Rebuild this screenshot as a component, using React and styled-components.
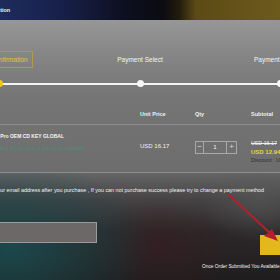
import React from "react"
import styled, { createGlobalStyle } from "styled-components"

const GlobalStyle = createGlobalStyle`
  html, body {
    margin: 0;
    padding: 0;
    background: #222;
  }
  body {
    font-family: "Liberation Sans", Arial, sans-serif;
  }
`

const Page = styled.div`
  position: relative;
  width: 280px;
  height: 280px;
  overflow: hidden;
  display: flex;
  flex-direction: column;
`

const TopBar = styled.div`
  height: 20px;
  flex-shrink: 0;
  display: flex;
  align-items: center;
  background: linear-gradient(
    90deg,
    #1e2b5c 0%,
    #17204a 22%,
    #0d0f1f 45%,
    #0b0b12 58%,
    #221c0c 64%,
    #5c4a16 70%,
    #6c5a1c 100%
  );
`

const Crumb = styled.span`
  margin-left: -24px;
  color: #f2f2f2;
  font-size: 5.5px;
  font-weight: bold;
  white-space: nowrap;
`

const Panel = styled.div`
  height: 153px;
  flex-shrink: 0;
  background: linear-gradient(180deg, #979797 0%, #848484 25%, #757575 50%, #6d6d6d 100%);
  display: flex;
  flex-direction: column;
`

const Steps = styled.div`
  margin-top: 31px;
  margin-left: -70px;
  display: grid;
  grid-template-columns: repeat(3, 140px);
  height: 17px;
  align-items: center;
  justify-items: center;
`

const Step = styled.div`
  font-size: 6.5px;
  white-space: nowrap;
  color: ${(p) => (p.$active ? "#e6c43c" : "#f4f4f4")};
  height: 17px;
  box-sizing: border-box;
  padding: 0 4px;
  display: flex;
  align-items: center;
  border: 1px solid ${(p) => (p.$active ? "#b6954c" : "transparent")};
`

const Track = styled.div`
  margin: 12px -4px 0;
  height: 7px;
  display: flex;
  justify-content: space-between;
  align-items: center;
  background: linear-gradient(#f4f4f4, #f4f4f4) center / 100% 2px no-repeat;
`

const Dot = styled.span`
  width: 7px;
  height: 7px;
  border-radius: 50%;
  background: ${(p) => (p.$active ? "#e8c91c" : "#f6f6f6")};
`

const Row = styled.div`
  margin-left: -52px;
  display: grid;
  grid-template-columns: 192px 55px 56px 60px;
  align-items: center;
  height: ${(p) => p.$h}px;
  margin-top: ${(p) => p.$mt || 0}px;
`

const HeadCell = styled.div`
  color: #f0f0f0;
  font-size: 5.5px;
  font-weight: bold;
  white-space: nowrap;
`

const Divider = styled.div`
  height: 1px;
  background: #8e8e8e;
  margin-top: ${(p) => p.$mt || 0}px;
`

const Product = styled.div`
  align-self: start;
  padding-top: 8px;
  display: flex;
  flex-direction: column;
  gap: 6px;
`

const ProductName = styled.div`
  margin-left: 22px;
  color: #f4f4f4;
  font-size: 5px;
  font-weight: bold;
  white-space: nowrap;
`

const ProductNote = styled.div`
  margin-left: 52px;
  color: #3f9a7c;
  font-size: 5px;
  white-space: nowrap;
  opacity: 0.8;
`

const Price = styled.div`
  color: #f2f2f2;
  font-size: 6px;
  white-space: nowrap;
  margin-top: -5px;
`

const Stepper = styled.div`
  width: 42px;
  height: 13px;
  box-sizing: border-box;
  border: 1px solid #a8a8a8;
  display: grid;
  grid-template-columns: 8px 1fr 10px;
  margin-top: -3px;
`

const StepBtn = styled.span`
  display: flex;
  align-items: center;
  justify-content: center;
  color: #d8d8d8;
  font-size: 8px;
  line-height: 1;
  border-left: ${(p) => (p.$side === "right" ? "1px solid #a8a8a8" : "none")};
  border-right: ${(p) => (p.$side === "left" ? "1px solid #a8a8a8" : "none")};
`

const QtyValue = styled.span`
  display: flex;
  align-items: center;
  justify-content: center;
  color: #f4f4f4;
  font-size: 6px;
`

const Subtotal = styled.div`
  align-self: start;
  padding-top: 13px;
  display: flex;
  flex-direction: column;
  font-size: 5.3px;
  white-space: nowrap;
`

const OldPrice = styled.span`
  color: #eeeeee;
  line-height: 10px;
  text-decoration: line-through;
`

const NewPrice = styled.span`
  color: #e3d536;
  font-size: 6px;
  line-height: 8px;
  font-weight: bold;
`

const Discount = styled.span`
  color: #2e2e2e;
  line-height: 8px;
`

const Lower = styled.div`
  flex: 1;
  display: flex;
  flex-direction: column;
  background:
    radial-gradient(ellipse 140px 90px at 10px 75px, rgba(26, 74, 78, 0.95), rgba(26, 74, 78, 0) 100%),
    radial-gradient(ellipse 70px 50px at 160px 75px, rgba(60, 26, 32, 0.5), rgba(60, 26, 32, 0) 100%),
    radial-gradient(ellipse 60px 45px at 260px 25px, rgba(90, 90, 90, 0.6), rgba(90, 90, 90, 0) 100%),
    linear-gradient(180deg, #666 0%, #454344 25%, #2c2829 55%, #201d1e 100%);
`

const Notice = styled.div`
  margin-top: 14px;
  margin-left: -39px;
  color: #f2f2f2;
  font-size: 5.4px;
  white-space: nowrap;
`

const LowerRow = styled.div`
  display: flex;
  justify-content: space-between;
  align-items: flex-start;
`

const EmailBox = styled.div`
  margin-top: 29px;
  margin-left: -40px;
  width: 137px;
  height: 21px;
  box-sizing: border-box;
  background: #6c6868;
  border: 1px solid #9c9a9a;
`

const Actions = styled.div`
  width: 78px;
  padding-top: 42px;
  display: flex;
  flex-direction: column;
`

const SubmitButton = styled.div`
  margin-left: 58px;
  width: 80px;
  height: 20px;
  background: #e2b81c;
`

const Hint = styled.div`
  margin-top: 9px;
  color: #f4f4f4;
  font-size: 4.8px;
  white-space: nowrap;
`

const Arrow = styled.svg`
  position: absolute;
  left: 0;
  top: 0;
  pointer-events: none;
`

export default function App() {
  return (
    <>
      <GlobalStyle />
      <Page>
        <TopBar>
          <Crumb>Confirmation</Crumb>
        </TopBar>
        <Panel>
          <Steps>
            <Step $active>Order Confirmation</Step>
            <Step>Payment Select</Step>
            <Step>Payment Success</Step>
          </Steps>
          <Track>
            <Dot $active />
            <Dot />
            <Dot />
          </Track>
          <Row $h={10} $mt={22}>
            <HeadCell>Product</HeadCell>
            <HeadCell>Unit Price</HeadCell>
            <HeadCell>Qty</HeadCell>
            <HeadCell>Subtotal</HeadCell>
          </Row>
          <Divider $mt={5} />
          <Row $h={47}>
            <Product>
              <ProductName>Windows 10 Pro OEM CD KEY GLOBAL</ProductName>
              <ProductNote>Key will be sent to your email instantly</ProductNote>
            </Product>
            <Price>USD 16.17</Price>
            <Stepper>
              <StepBtn $side="left">−</StepBtn>
              <QtyValue>1</QtyValue>
              <StepBtn $side="right">+</StepBtn>
            </Stepper>
            <Subtotal>
              <OldPrice>USD 16.17</OldPrice>
              <NewPrice>USD 12.94</NewPrice>
              <Discount>Discount : USD 3.23</Discount>
            </Subtotal>
          </Row>
          <Divider />
        </Panel>
        <Lower>
          <Notice>
            Please check your email address after you purchase , If you can not purchase success please try to change a payment method
          </Notice>
          <LowerRow>
            <EmailBox />
            <Actions>
              <SubmitButton />
              <Hint>Once Order Submitted You Available To Pay</Hint>
            </Actions>
          </LowerRow>
        </Lower>
        <Arrow width="280" height="280" viewBox="0 0 280 280">
          <line x1="228" y1="194" x2="270" y2="233" stroke="#b3202c" strokeWidth="2" />
          <polygon points="278,241 264,236 272,229" fill="#b3202c" />
        </Arrow>
      </Page>
    </>
  )
}
